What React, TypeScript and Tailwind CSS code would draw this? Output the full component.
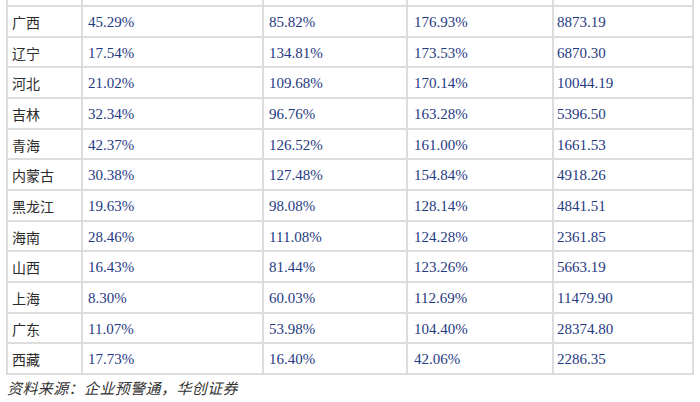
import React from "react";

const rows: string[][] = [
  ["广西", "45.29%", "85.82%", "176.93%", "8873.19"],
  ["辽宁", "17.54%", "134.81%", "173.53%", "6870.30"],
  ["河北", "21.02%", "109.68%", "170.14%", "10044.19"],
  ["吉林", "32.34%", "96.76%", "163.28%", "5396.50"],
  ["青海", "42.37%", "126.52%", "161.00%", "1661.53"],
  ["内蒙古", "30.38%", "127.48%", "154.84%", "4918.26"],
  ["黑龙江", "19.63%", "98.08%", "128.14%", "4841.51"],
  ["海南", "28.46%", "111.08%", "124.28%", "2361.85"],
  ["山西", "16.43%", "81.44%", "123.26%", "5663.19"],
  ["上海", "8.30%", "60.03%", "112.69%", "11479.90"],
  ["广东", "11.07%", "53.98%", "104.40%", "28374.80"],
  ["西藏", "17.73%", "16.40%", "42.06%", "2286.35"],
];

const pads = ["pl-[4px]", "pl-[5px]", "pl-[5px]", "pl-[6px]", "pl-[3px]"];

export default function App() {
  return (
    <div className="w-[700px] h-[402px] bg-white overflow-hidden">
      <div className="ml-[6px] w-[688px] bg-[#dcdcdc] px-[2px] pb-[2px] grid grid-cols-[73px_179px_142px_144px_138px] gap-x-[2px] gap-y-[2px] grid-rows-[5px_repeat(4,29px_28px_29px)]">
        {[0, 1, 2, 3, 4].map((i) => (
          <div key={"t" + i} className="bg-white" />
        ))}
        {rows.map((r, ri) =>
          r.map((c, ci) => (
            <div
              key={ri + "-" + ci}
              className={`bg-white flex items-center pt-[2px] ${pads[ci]} ${
                ci === 0
                  ? "text-[14px] text-[#2b2b2b] font-[family-name:'Noto_Sans_CJK_SC',sans-serif]"
                  : "text-[15px] text-[#1f3a82] font-[family-name:'Liberation_Serif',serif]"
              }`}
            >
              {c}
            </div>
          ))
        )}
      </div>
      <div className="pl-[7px] pt-[2px] text-[15px] tracking-[0.4px] italic text-[#333] font-[family-name:'Noto_Sans_CJK_SC',sans-serif] leading-[22px]">
        资料来源：企业预警通，华创证券
      </div>
    </div>
  );
}
